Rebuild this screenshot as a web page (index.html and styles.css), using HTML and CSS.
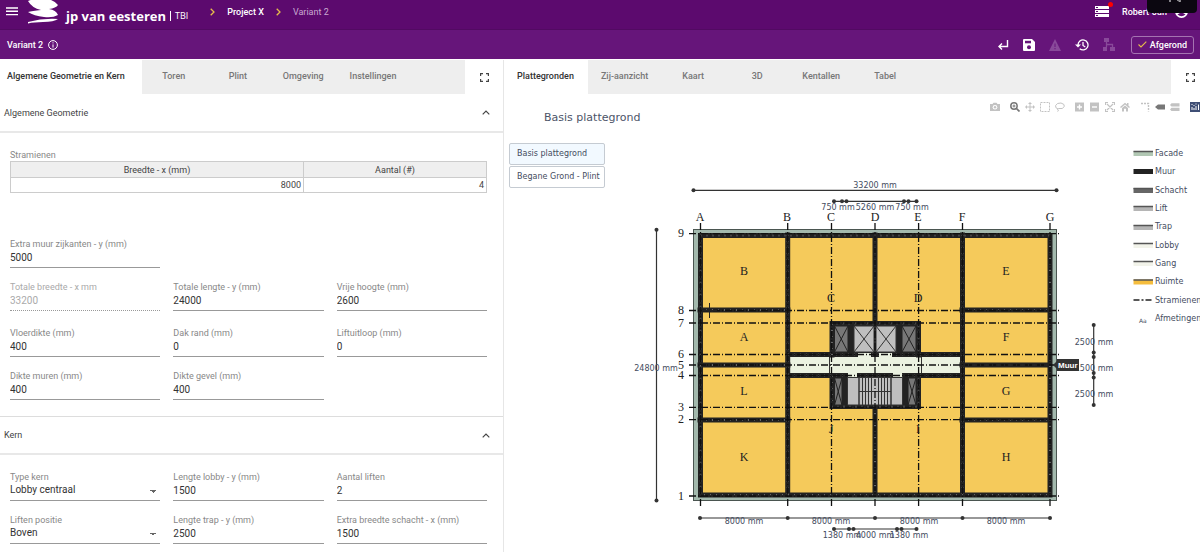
FILE: index.html
```html
<!DOCTYPE html>
<html lang="nl">
<head>
<meta charset="utf-8">
<title>Variant 2</title>
<link rel="stylesheet" href="styles.css">
</head>
<body>
<div class="app">
<header class="topbar">
  <button class="icon-btn menu" aria-label="Menu"><svg width="12" height="9" viewBox="0 0 12 9"><path d="M0 1h12M0 4.300h12M0 7.600h12" stroke="#fff" stroke-width="1.400"/></svg></button>
  <div class="brand">
    <svg width="32" height="26" viewBox="0 0 32 26" fill="#fff"><path d="M1 2Q4 .5 10 0H20Q27 1 31 6Q29 9 22 10Q29 11 31 16Q26 19 17 18Q7 17 1 13Q5 12 14 11Q5 9 1 2Z"/><path d="M1 23Q16 19 31 20Q27 23 16 23Q7 23 1 24.500Z"/></svg>
    <span class="brand-name">jp van eesteren</span><span class="brand-sub"><i></i>TBI</span>
  </div>
  <nav class="crumbs">
    <svg width="5" height="8" viewBox="0 0 5 8"><path d="M.7.7 4 4 .7 7.300" fill="none" stroke="#e6bd4a" stroke-width="1.300"/></svg>
    <a href="#" class="crumb">Project X</a>
    <svg width="5" height="8" viewBox="0 0 5 8"><path d="M.7.7 4 4 .7 7.300" fill="none" stroke="#e6bd4a" stroke-width="1.300"/></svg>
    <a href="#" class="crumb crumb-last">Variant 2</a>
  </nav>
  <div class="user">
    <button class="icon-btn tasks" aria-label="Taken"><svg width="14" height="11" viewBox="0 0 14 11"><path d="M0 0h14v3H0zM0 4h14v3H0zM0 8h14v3H0z" fill="#fff"/><path d="M1 1.500h2M1 5.500h2M1 9.500h2" stroke="#5c0a6e"/></svg><span class="badge"></span></button>
    <span class="user-name">Robert-Jan</span>
    <svg width="13" height="13" viewBox="0 0 13 13"><circle cx="6.500" cy="6.500" r="6.500" fill="#fff"/><circle cx="6.500" cy="4.500" r="2" fill="#5c0a6e"/><path d="M2.500 9.500Q6.500 6 10.500 9.500Q6.500 13 2.500 9.500" fill="#5c0a6e"/></svg>
    <div class="notch"><svg width="14" height="3" viewBox="0 0 14 3"><path d="M3 0V3M2 .5H5M10 .5 12 2.500M13 0V3" stroke="#fff" fill="none"/></svg></div>
  </div>
</header>
<div class="subbar">
  <h1 class="variant">Variant 2</h1>
  <svg class="info" width="10" height="10" viewBox="0 0 10 10" fill="none" stroke="#fff"><circle cx="5" cy="5" r="4.400"/><path d="M5 4.400V7.600M5 2.300V3.400"/></svg>
  <div class="tools">
    <button class="icon-btn" aria-label="Terug"><svg width="12" height="12" viewBox="0 0 12 12" fill="none" stroke="#fff" stroke-width="1.400"><path d="M10.500 1V7.500H2M5 4.500 2 7.500 5 10.500"/></svg></button>
    <button class="icon-btn" aria-label="Opslaan"><svg width="12" height="12" viewBox="0 0 12 12"><path d="M1 0H9L12 3V11Q12 12 11 12H1Q0 12 0 11V1Q0 0 1 0Z" fill="#fff"/><path d="M2 1.800H8V4.300H2Z" fill="#66157a"/><circle cx="6" cy="8.300" r="2" fill="#66157a"/></svg></button>
    <button class="icon-btn" aria-label="Waarschuwingen" disabled><svg width="12" height="12" viewBox="0 0 12 12"><path d="M6 0 12 12H0Z" fill="#89499a"/><path d="M6 4.500V8M6 9V10.300" stroke="#66157a"/></svg></button>
    <button class="icon-btn" aria-label="Geschiedenis"><svg width="14" height="12" viewBox="0 0 14 12" fill="none" stroke="#fff" stroke-width="1.300"><path d="M3 6A5 5 0 1 1 4.700 9.700M8 3V6.500L10.300 8"/><path d="M0 5.500H6L3 8.500Z" fill="#fff" stroke="none"/></svg></button>
    <button class="icon-btn" aria-label="Structuur" disabled><svg width="12" height="13" viewBox="0 0 12 13" fill="#89499a"><path d="M1 0H6V4H1ZM0 9H4V13H0ZM7 9H12V13H7Z"/><path d="M3.500 3V9M3.500 6.500H9.500V10" fill="none" stroke="#89499a" stroke-width="1.300"/></svg></button>
    <button class="done"><svg width="9" height="7" viewBox="0 0 9 7"><path d="M.5 3.500 3 6 8.300.700" fill="none" stroke="#e6bd4a" stroke-width="1.100"/></svg>Afgerond</button>
  </div>
</div>
<main class="panels">
<section class="panel panel-left">
  <div class="tabs" role="tablist">
    <button class="tab active first" role="tab">Algemene Geometrie en Kern</button>
    <div class="tab-rest">
      <button class="tab" role="tab">Toren</button><button class="tab" role="tab">Plint</button><button class="tab" role="tab">Omgeving</button><button class="tab" role="tab">Instellingen</button>
    </div>
    <button class="icon-btn expand" aria-label="Volledig scherm"><svg width="9" height="9" viewBox="0 0 9 9" fill="none" stroke="#444" stroke-width="1.200"><path d="M.6 3V.6H3M6 .6H8.400V3M8.400 6V8.400H6M3 8.400H.6V6"/></svg></button>
  </div>
  <button class="section-head">Algemene Geometrie<svg width="8" height="5" viewBox="0 0 8 5"><path d="M.7 4.300 4 1 7.300 4.300" fill="none" stroke="#444" stroke-width="1.200"/></svg></button>
  <div class="section-body">
    <table class="grid-table">
      <caption>Stramienen</caption>
      <thead><tr><th class="col-wide">Breedte - x (mm)</th><th>Aantal (#)</th></tr></thead>
      <tbody><tr><td>8000</td><td>4</td></tr></tbody>
    </table>
    <div class="fields">
      <label class="field solo">Extra muur zijkanten - y (mm)<input value="5000"></label>
      <label class="field off">Totale breedte - x mm<input value="33200" disabled></label>
      <label class="field">Totale lengte - y (mm)<input value="24000"></label>
      <label class="field">Vrije hoogte (mm)<input value="2600"></label>
      <label class="field spaced">Vloerdikte (mm)<input value="400"></label>
      <label class="field spaced">Dak rand (mm)<input value="0"></label>
      <label class="field spaced">Liftuitloop (mm)<input value="0"></label>
      <label class="field">Dikte muren (mm)<input value="400"></label>
      <label class="field">Dikte gevel (mm)<input value="400"></label>
    </div>
  </div>
  <button class="section-head kern">Kern<svg width="8" height="5" viewBox="0 0 8 5"><path d="M.7 4.300 4 1 7.300 4.300" fill="none" stroke="#444" stroke-width="1.200"/></svg></button>
  <div class="section-body">
    <div class="fields">
      <label class="field">Type kern<select><option>Lobby centraal</option></select></label>
      <label class="field">Lengte lobby - y (mm)<input value="1500"></label>
      <label class="field">Aantal liften<input value="2"></label>
      <label class="field">Liften positie<select><option>Boven</option></select></label>
      <label class="field">Lengte trap - y (mm)<input value="2500"></label>
      <label class="field">Extra breedte schacht - x (mm)<input value="1500"></label>
    </div>
  </div>
</section>
<section class="panel panel-right">
  <div class="tabs" role="tablist">
    <button class="tab active" role="tab">Plattegronden</button>
    <div class="tab-rest">
      <button class="tab" role="tab">Zij-aanzicht</button><button class="tab" role="tab">Kaart</button><button class="tab" role="tab">3D</button><button class="tab" role="tab">Kentallen</button><button class="tab" role="tab">Tabel</button>
    </div>
    <button class="icon-btn expand edge" aria-label="Volledig scherm"><svg width="9" height="9" viewBox="0 0 9 9" fill="none" stroke="#444" stroke-width="1.200"><path d="M.6 3V.6H3M6 .6H8.400V3M8.400 6V8.400H6M3 8.400H.6V6"/></svg></button>
  </div>
  <div class="plot-head">
    <h2 class="plot-title">Basis plattegrond</h2>
    <div class="modebar">
      <div class="mode-group"><svg viewBox="0 0 10 10"><path d="M0 2H2.500L3.500.8H6.500L7.500 2H10V9H0Z"/><circle cx="5" cy="5.300" r="2.300" fill="#fff"/><circle cx="5" cy="5.300" r="1.200"/></svg></div>
      <div class="mode-group">
        <svg viewBox="0 0 10 10"><circle cx="4" cy="4" r="3.200" fill="none" stroke="#777" stroke-width="1.500"/><path d="M6.500 6.500 9.500 9.500" stroke="#777" stroke-width="1.700"/><path d="M2.500 4H5.500M4 2.500V5.500" stroke="#777"/></svg>
        <svg viewBox="0 0 10 10"><path d="M5 0 7 2H5.500V4.500H8V3L10 5 8 7V5.500H5.500V8H7L5 10 3 8H4.500V5.500H2V7L0 5 2 3V4.500H4.500V2H3Z"/></svg>
        <svg viewBox="0 0 10 10"><path d="M.5.500H9.500V9.500H.5Z" fill="none" stroke="#c2c2c2" stroke-dasharray="2 1"/></svg>
        <svg viewBox="0 0 10 10"><path d="M3 7Q0 6 .6 3.500Q2 .7 6 1Q10 2 9.300 4.500Q8 7.500 3.500 6.500Q2 7 3 8Q4 9 2.500 9.600" fill="none" stroke="#c2c2c2"/></svg>
      </div>
      <div class="mode-group">
        <svg viewBox="0 0 10 10"><path d="M0 .5H9V9.500H0Z"/><path d="M2 5H7M4.500 2.500V7.500" stroke="#fff" stroke-width="1.400"/></svg>
        <svg viewBox="0 0 10 10"><path d="M0 .5H9V9.500H0Z"/><path d="M2 5H7" stroke="#fff" stroke-width="1.400"/></svg>
        <svg viewBox="0 0 10 10"><path d="M2 2 8 8M8 2 2 8M.5 3V.5H3M7 .5H9.500V3M9.500 7V9.500H7M3 9.500H.5V7" fill="none" stroke="#c2c2c2" stroke-width="1.200"/></svg>
        <svg viewBox="0 0 10 10"><path d="M5 .8 10 5 9 6 5 2.600 1 6 0 5ZM7 1H8.500V4L7 2.500ZM2 6 5 3.600 8 6V9.500H6V6.800H4V9.500H2Z"/></svg>
      </div>
      <div class="mode-group">
        <svg viewBox="0 0 10 10"><path d="M1 1.500H8.500V9.500" fill="none" stroke="#c2c2c2" stroke-width="1.400" stroke-dasharray="2 1"/></svg>
        <svg viewBox="0 0 10 10"><path d="M0 5 3 2.500H10V7.500H3Z" fill="#777"/></svg>
        <svg viewBox="0 0 10 10"><path d="M0 3 1.500 1.200H9.500V4.500H1.500ZM0 7.500 1.500 5.800H9.500V9H1.500Z"/></svg>
      </div>
      <div class="mode-group"><svg viewBox="0 0 10 10"><path d="M0 0H10V10H0Z" fill="#3f4f75"/><path d="M2 8V5M4 8V6M6 8V4M8.500 8V2.500M2 3V2M4 4V3M6 2.500V1.500" stroke="#fff"/></svg></div>
    </div>
  </div>
  <div class="plot-body">
    <div class="levels">
      <button class="level selected">Basis plattegrond</button>
      <button class="level">Begane Grond - Plint</button>
    </div>
    <svg class="plan" viewBox="606 142 594 410">
      <defs><path id="walls" d="M700.500 235.500H1050V495H700.500ZM787.700 235V495M962.500 235V495M875 235V323M875 407V495M700 310H788M700 365H788M700 420H788M962 310H1050M962 365H1050M962 420H1050M788 354.500H962M788 375.500H962M832 355V323.500H918.500V355M832 376V406.500H918.500V376"/></defs>
      <rect class="facade" x="693.500" y="229.500" width="363" height="271"/>
      <rect class="room" x="700" y="234" width="350" height="261"/>
      <rect class="gang" x="788" y="357" width="174" height="17"/>
      <path class="thin" d="M829.500 357V374M921.500 357V374"/>
      <path class="core" d="M832 323H919V355H832ZM832 376H919V407H832Z"/>
      <use class="wall" href="#walls"/>
      <use class="wall-dots" href="#walls"/>
      <g class="shaft"><path d="M834.500 326H848V352H834.500ZM902 326H916V352H902ZM834.500 378H842V405H834.500ZM908 378H916V405H908Z"/><path d="M834.500 326 848 352M848 326 834.500 352M902 326 916 352M916 326 902 352M834.500 378 842 405M842 378 834.500 405M908 378 916 405M916 378 908 405"/></g>
      <g class="lift"><path d="M854 326H874V352H854ZM876 326H896V352H876Z"/><path d="M854 326 874 352M874 326 854 352M876 326 896 352M896 326 876 352"/></g>
      <path class="lift" d="M847.500 377.500H859V405H847.500ZM891 377.500H902.500V405H891ZM859 377.500H891V405H859Z"/>
      <path class="lobby" d="M858 353H871V359H858ZM879 353H892V359H879ZM848 372H857V377H848ZM893 372H902V377H893Z"/>
      <path class="thin" d="M859 391.500H891M862.500 377V405M865.500 377V405M868.500 377V405M871.500 377V405M878.500 377V405M881.500 377V405M884.500 377V405M887.500 377V405"/>
      <path class="axis" d="M700.500 223V508M787.700 223V508M831.500 223V508M875 223V508M918.600 223V508M962.500 223V508M1050 223V508"/>
      <path class="axis" d="M689 233.700H1059M689 310.500H1059M689 323H1059M689 354.500H1059M689 365H1059M689 375.500H1059M689 407.300H1059M689 419.600H1059M689 496H1059"/>
      <path class="cross" d="M702 310.500H717M709.500 303V318"/>
      <g class="grid-name mid">
        <text x="700" y="221">A</text><text x="787" y="221">B</text><text x="831" y="221">C</text><text x="875" y="221">D</text><text x="918" y="221">E</text><text x="962" y="221">F</text><text x="1050" y="221">G</text>
        <text x="681" y="237">9</text><text x="681" y="314">8</text><text x="681" y="327">7</text><text x="681" y="358">6</text><text x="681" y="369">5</text><text x="681" y="379">4</text><text x="681" y="411">3</text><text x="681" y="423">2</text><text x="681" y="500">1</text>
        <text x="744" y="275">B</text><text x="831" y="302">C</text><text x="918" y="302">D</text><text x="1006" y="275">E</text><text x="744" y="341">A</text><text x="1006" y="341">F</text><text x="744" y="395">L</text><text x="1006" y="395">G</text><text x="744" y="461">K</text><text x="1006" y="461">H</text><text x="831" y="433">J</text><text x="918" y="433">I</text>
      </g>
      <g class="dim">
        <path d="M693.500 190.300H1056.500M833.500 201.300H916.500M656.500 230V500.500M700 518H1050M833.500 529H916.500M1093.700 325V405"/>
        <g><circle cx="693.500" cy="190.300" r="2"/><circle cx="1056.500" cy="190.300" r="2"/><circle cx="834" cy="201.300" r="2"/><circle cx="842" cy="201.300" r="2"/><circle cx="846.500" cy="201.300" r="2"/><circle cx="904" cy="201.300" r="2"/><circle cx="908.500" cy="201.300" r="2"/><circle cx="916.500" cy="201.300" r="2"/><circle cx="656.500" cy="229.700" r="2"/><circle cx="656.500" cy="500.500" r="2"/><circle cx="700" cy="518" r="2"/><circle cx="787.700" cy="518" r="2"/><circle cx="875" cy="518" r="2"/><circle cx="962.500" cy="518" r="2"/><circle cx="1050" cy="518" r="2"/><circle cx="834" cy="529" r="2"/><circle cx="849" cy="529" r="2"/><circle cx="853.500" cy="529" r="2"/><circle cx="897" cy="529" r="2"/><circle cx="901.500" cy="529" r="2"/><circle cx="916.500" cy="529" r="2"/><circle cx="1093.700" cy="325" r="2"/><circle cx="1093.700" cy="352.500" r="2"/><circle cx="1093.700" cy="357" r="2"/><circle cx="1093.700" cy="373" r="2"/><circle cx="1093.700" cy="377.500" r="2"/><circle cx="1093.700" cy="405" r="2"/></g>
      </g>
      <g class="label mid">
        <text x="875" y="188">33200 mm</text><text x="838" y="210">750 mm</text><text x="875" y="210">5260 mm</text><text x="912" y="210">750 mm</text>
        <text x="656" y="371">24800 mm</text><text x="744" y="524">8000 mm</text><text x="831" y="524">8000 mm</text><text x="919" y="524">8000 mm</text><text x="1006" y="524">8000 mm</text>
        <text x="842" y="538">1380 mm</text><text x="875" y="538">4000 mm</text><text x="909" y="538">1380 mm</text>
        <text x="1094" y="345">2500 mm</text><text x="1094" y="371">1500 mm</text><text x="1094" y="397">2500 mm</text>
      </g>
      <path class="tip" d="M1053 365 1057 361V359H1079V371H1057V369Z"/>
      <text class="tip-text" x="1058" y="368">Muur</text>
      <g>
        <path d="M1133.500 153.500H1153" stroke="#b1c7b3" stroke-width="5"/><path d="M1133.500 171.500H1153" stroke="#222" stroke-width="5"/><path d="M1133.500 190.500H1153" stroke="#666" stroke-width="5"/><path d="M1133.500 208.500H1153" stroke="#b5b5b5" stroke-width="5"/><path d="M1133.500 227.500H1153" stroke="#b5b5b5" stroke-width="5"/><path d="M1133.500 245.500H1153M1133.500 263.500H1153" stroke="#f2f3ea" stroke-width="5"/><path d="M1133.500 282H1153" stroke="#f5bd3d" stroke-width="5"/>
        <path d="M1133.500 151.500H1153M1133.500 188.500H1153M1133.500 206.500H1153M1133.500 225.500H1153M1133.500 243.500H1153M1133.500 261.500H1153M1133.500 280H1153" stroke="#555" stroke-width="1.300"/>
        <path d="M1133.500 300H1153" stroke="#222" stroke-width="1.500" stroke-dasharray="6 2 2 2"/>
      </g>
      <g class="label">
        <text x="1155" y="156">Facade</text><text x="1155" y="174">Muur</text><text x="1155" y="193">Schacht</text><text x="1155" y="211">Lift</text><text x="1155" y="229">Trap</text><text x="1155" y="248">Lobby</text><text x="1155" y="266">Gang</text><text x="1155" y="284">Ruimte</text><text x="1155" y="303">Stramienen</text><text x="1155" y="321">Afmetingen</text><text class="small" x="1139" y="323">Aa</text>
      </g>
    </svg>
  </div>
</section>
</main>
</div>
</body>
</html>
```
FILE: styles.css
```css
* { box-sizing: border-box; }
body { margin: 0; background: #fff; font-family: Roboto, "Liberation Sans", sans-serif; font-size: 9px; color: #444; }
button { font: inherit; color: inherit; background: none; border: 0; padding: 0; margin: 0; }
svg { display: block; flex: none; }
.app { height: 100vh; overflow: hidden; display: flex; flex-direction: column; }
.icon-btn { display: flex; align-items: center; justify-content: center; }
.topbar { height: 30px; flex: none; display: flex; align-items: center; background: #5c0a6e; color: #fff; padding: 0 12px 6px 6px; border-bottom: 1px solid #520a62; }
.brand { display: flex; align-items: center; margin-left: 9px; }
.brand-name { font: bold 13px/20px "Open Sans", sans-serif; margin: 9px 0 0 7px; }
.brand-sub { font: 9px/20px "Open Sans", sans-serif; margin-top: 9px; display: flex; align-items: center; }
.brand-sub i { width: 1px; height: 10px; background: #fff; margin: 0 4px; }
.crumbs { display: flex; align-items: center; margin-left: 22px; gap: 12px; }
.crumb { color: #fff; text-decoration: none; font-weight: 500; }
.crumb-last { color: #c9a9d1; font-weight: 400; }
.user { display: flex; align-items: center; margin-left: auto; position: relative; }
.user-name { font-weight: 500; margin: 0 8px 0 13px; }
.tasks { position: relative; }
.badge { position: absolute; right: -4px; top: -4px; width: 5px; height: 5px; border-radius: 50%; background: #f00; }
.notch { position: absolute; right: -9px; top: -6px; width: 50px; height: 14px; border-radius: 0 0 4px 4px; background: #0b0710; padding-left: 20px; }
.subbar { height: 29px; flex: none; display: flex; align-items: center; background: #66157a; color: #fff; padding: 0 6px 0 7px; }
.variant { font-size: 9px; font-weight: 500; margin: 0 5px 0 0; }
.tools { margin-left: auto; display: flex; align-items: center; gap: 14px; }
.done { display: flex; align-items: center; gap: 3px; height: 18px; margin-left: 2px; padding: 0 6px; border: 1px solid #a573b1; border-radius: 3px; font-weight: 500; }
.panels { flex: 1; display: grid; grid-template-columns: 42% 1fr; min-height: 0; padding-top: 1px; }
.panel { min-width: 0; }
.panel-left { border-right: 1px solid #e6e6e6; }
.tabs { display: flex; height: 34px; }
.tab { min-width: 64px; padding: 0 13px 2px; font-weight: 500; color: #777; white-space: nowrap; }
.tab.active { color: #333; padding: 0 14px 2px 13px; }
.tab.active.first { padding: 0 17px 2px 7px; }
.tab-rest { flex: 1; background: #eee; display: flex; }
.expand { width: 38px; }
.edge { width: 29px; padding-left: 9px; }
.section-head { display: flex; width: 100%; height: 39px; align-items: center; justify-content: space-between; padding: 0 13px 0 4px; border-bottom: 2px solid #e8e8e8; }
.kern { border-top: 1px solid #ddd; }
.section-body { padding: 16px 16px 16px 10px; }
.grid-table { width: 100%; border-collapse: collapse; margin-bottom: 45px; }
.grid-table caption { text-align: left; color: #888; line-height: 12px; }
.grid-table th { background: #efefef; font-weight: 400; height: 16px; border: 1px solid #ccc; padding: 0; }
.grid-table td { height: 15px; text-align: right; padding: 0 2px; border: 1px solid #ccc; }
.grid-table .col-wide { width: 293px; }
.fields { display: grid; grid-template-columns: repeat(3, 1fr); column-gap: 13px; row-gap: 13px; }
.field { color: #888; line-height: 13px; min-width: 0; }
.solo { grid-column: 1 / -1; width: calc((100% - 26px) / 3); }
.spaced { margin-top: 3px; }
.off { color: #aaa; }
.field input, .field select { display: block; width: 100%; height: 17px; border: 0; border-bottom: 1px solid #999; border-radius: 0; padding: 0 0 4px; margin: 0; font: 10px/12px Roboto, sans-serif; color: #333; background: transparent; appearance: none; }
.field input:disabled { color: #aaa; border-bottom: 1px dotted #999; }
.field select { background: linear-gradient(to bottom left, #666 50%, transparent 50%) calc(100% - 7px) 6px / 3px 3px no-repeat, linear-gradient(to bottom right, #666 50%, transparent 50%) calc(100% - 4px) 6px / 3px 3px no-repeat; }
.plot-head { display: flex; justify-content: space-between; height: 48px; padding-left: 40px; }
.plot-title { font: 11px/16px "DejaVu Sans", sans-serif; color: #4c5468; margin: 16px 0 0; }
.modebar { display: flex; gap: 10px; padding-top: 8px; }
.mode-group { display: flex; gap: 5px; }
.mode-group svg { width: 10px; height: 10px; fill: #c2c2c2; }
.plot-body { display: flex; align-items: flex-start; }
.levels { width: 102px; padding: 1px 1px 0 5px; display: flex; flex-direction: column; gap: 1px; }
.level { height: 22px; text-align: left; padding: 0 7px; border: 1px solid #c5cbd2; border-radius: 2px; font: 8px/12px "DejaVu Sans", sans-serif; color: #444c60; white-space: nowrap; }
.selected { background: #f2f9ff; }
.plan { flex: 1; min-width: 0; }
.facade { fill: #a3b9ad; stroke: #4a5550; }
.room { fill: #f5ca5b; }
.gang { fill: #ebf2e1; }
.lobby { fill: #ebf2e1; }
.core { fill: #222; }
.wall { fill: none; stroke: #222; stroke-width: 5; stroke-linecap: square; }
.wall-dots { fill: none; stroke: #666; stroke-width: 2; stroke-dasharray: 1 5; }
.thin { fill: none; stroke: #333; }
.shaft { fill: #777; stroke: #222; }
.lift { fill: #bfbfbf; stroke: #333; }
.axis { fill: none; stroke: #111; stroke-width: 1.3; stroke-dasharray: 7 2 1 2; }
.cross { stroke: #222; stroke-width: 1; }
.grid-name { font: 12px "Liberation Serif", serif; fill: #222; }
.mid { text-anchor: middle; }
.dim { fill: #333; }
.dim path { fill: none; stroke: #333; stroke-width: 1.2; }
.label { font: 8px "DejaVu Sans", sans-serif; fill: #444c60; }
.small { font-size: 6px; }
.tip { fill: #333; }
.tip-text { font: bold 8px "Liberation Sans", sans-serif; fill: #fff; }
```
